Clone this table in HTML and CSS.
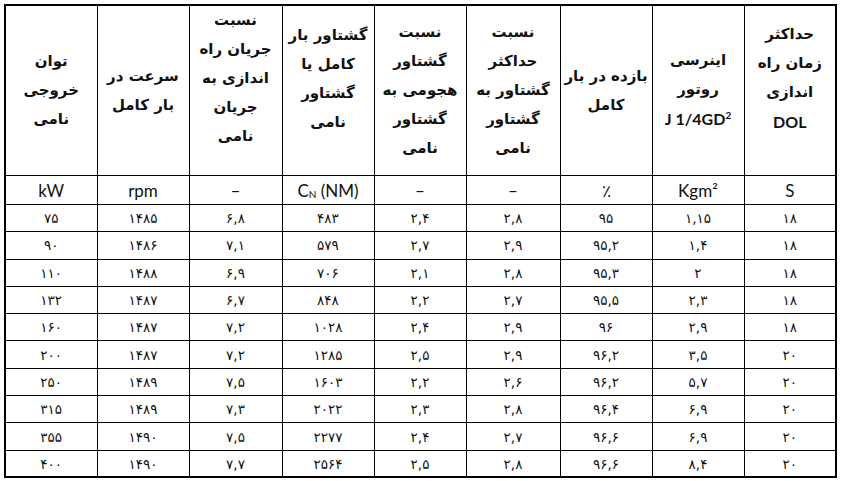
FILE: index.html
```html
<!DOCTYPE html>
<html lang="fa">
<head>
<meta charset="utf-8">
<link rel="stylesheet" href="styles.css">
</head>
<body>
<table class="spec" dir="rtl">
  <colgroup>
    <col class="c92"><col class="c92"><col class="c92"><col class="c94"><col class="c92"><col class="c92"><col class="c93"><col class="c92"><col class="c92">
  </colgroup>
  <thead>
    <tr class="head">
      <th class="up">حداکثر<br>زمان راه<br>اندازی<br><span class="lat">DOL</span></th>
      <th>اینرسی<br>روتور<br><span class="lat">J 1/4GD<sup>2</sup></span></th>
      <th>بازده در بار<br>کامل</th>
      <th>نسبت<br>حداکثر<br>گشتاور به<br>گشتاور<br>نامی</th>
      <th>نسبت<br>گشتاور<br>هجومی به<br>گشتاور<br>نامی</th>
      <th class="up">گشتاور بار<br>کامل یا<br>گشتاور<br>نامی</th>
      <th class="up">نسبت<br>جریان راه<br>اندازی به<br>جریان<br>نامی</th>
      <th>سرعت در<br>بار کامل</th>
      <th>توان<br>خروجی<br>نامی</th>
    </tr>
    <tr class="units">
      <td>S</td>
      <td>Kgm²</td>
      <td>٪</td>
      <td>–</td>
      <td>–</td>
      <td>C<sub>N</sub> (NM)</td>
      <td>–</td>
      <td>rpm</td>
      <td>kW</td>
    </tr>
  </thead>
  <tbody>
    <tr><td>۱۸</td><td>۱,۱۵</td><td>۹۵</td><td>۲,۸</td><td>۲,۴</td><td>۴۸۳</td><td>۶,۸</td><td>۱۴۸۵</td><td>۷۵</td></tr>
    <tr><td>۱۸</td><td>۱,۴</td><td>۹۵,۲</td><td>۲,۹</td><td>۲,۷</td><td>۵۷۹</td><td>۷,۱</td><td>۱۴۸۶</td><td>۹۰</td></tr>
    <tr><td>۱۸</td><td>۲</td><td>۹۵,۳</td><td>۲,۸</td><td>۲,۱</td><td>۷۰۶</td><td>۶,۹</td><td>۱۴۸۸</td><td>۱۱۰</td></tr>
    <tr><td>۱۸</td><td>۲,۳</td><td>۹۵,۵</td><td>۲,۷</td><td>۲,۲</td><td>۸۴۸</td><td>۶,۷</td><td>۱۴۸۷</td><td>۱۳۲</td></tr>
    <tr><td>۱۸</td><td>۲,۹</td><td>۹۶</td><td>۲,۹</td><td>۲,۴</td><td>۱۰۲۸</td><td>۷,۲</td><td>۱۴۸۷</td><td>۱۶۰</td></tr>
    <tr><td>۲۰</td><td>۳,۵</td><td>۹۶,۲</td><td>۲,۹</td><td>۲,۵</td><td>۱۲۸۵</td><td>۷,۲</td><td>۱۴۸۷</td><td>۲۰۰</td></tr>
    <tr><td>۲۰</td><td>۵,۷</td><td>۹۶,۲</td><td>۲,۶</td><td>۲,۲</td><td>۱۶۰۳</td><td>۷,۵</td><td>۱۴۸۹</td><td>۲۵۰</td></tr>
    <tr><td>۲۰</td><td>۶,۹</td><td>۹۶,۴</td><td>۲,۸</td><td>۲,۳</td><td>۲۰۲۲</td><td>۷,۳</td><td>۱۴۸۹</td><td>۳۱۵</td></tr>
    <tr><td>۲۰</td><td>۶,۹</td><td>۹۶,۶</td><td>۲,۷</td><td>۲,۴</td><td>۲۲۷۷</td><td>۷,۵</td><td>۱۴۹۰</td><td>۳۵۵</td></tr>
    <tr><td>۲۰</td><td>۸,۴</td><td>۹۶,۶</td><td>۲,۸</td><td>۲,۵</td><td>۲۵۶۴</td><td>۷,۷</td><td>۱۴۹۰</td><td>۴۰۰</td></tr>
  </tbody>
</table>
</body>
</html>
```

FILE: styles.css
```css
html, body {
  margin: 0;
  padding: 0;
  background: #ffffff;
}
body {
  padding: 4px 0 0 4px;
  color: #111111;
  font-family: "DejaVu Sans", sans-serif;
}
.spec {
  border-collapse: collapse;
  table-layout: fixed;
  width: 831px;
  border: 2px solid #000000;
}
.c92 { width: 92px; }
.c93 { width: 93px; }
.c94 { width: 94px; }
.spec th,
.spec td {
  box-sizing: border-box;
  border: 1px solid #000000;
  text-align: center;
  vertical-align: middle;
  padding: 0;
}
.head th {
  height: 166px;
  font-size: 15px;
  font-weight: bold;
  line-height: 29px;
}
.head th.up {
  padding-bottom: 24px;
}
.lat {
  font-family: "Lato", "Liberation Sans", sans-serif;
  font-size: 16px;
  font-weight: bold;
}
.lat sup {
  font-size: 10px;
  line-height: 0;
  vertical-align: 6px;
}
.units td {
  height: 29px;
  font-family: "Lato", "Liberation Sans", sans-serif;
  font-size: 17px;
}
.units sub {
  font-size: 10px;
  line-height: 0;
  vertical-align: -1px;
}
tbody td {
  height: 27.3px;
  font-size: 13.5px;
}
```
